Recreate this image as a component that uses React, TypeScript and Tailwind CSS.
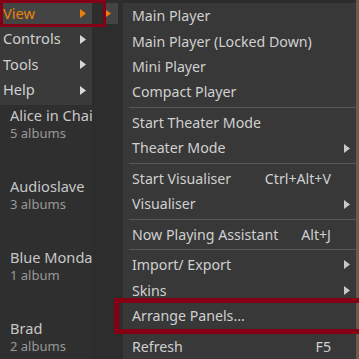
type Item =
  | { kind: "item"; label: string; shortcut?: string; sub?: boolean }
  | { kind: "sep" };

const items: Item[] = [
  { kind: "item", label: "Main Player" },
  { kind: "item", label: "Main Player (Locked Down)" },
  { kind: "item", label: "Mini Player" },
  { kind: "item", label: "Compact Player" },
  { kind: "sep" },
  { kind: "item", label: "Start Theater Mode" },
  { kind: "item", label: "Theater Mode", sub: true },
  { kind: "sep" },
  { kind: "item", label: "Start Visualiser", shortcut: "Ctrl+Alt+V" },
  { kind: "item", label: "Visualiser", sub: true },
  { kind: "sep" },
  { kind: "item", label: "Now Playing Assistant", shortcut: "Alt+J" },
  { kind: "sep" },
  { kind: "item", label: "Import/ Export", sub: true },
  { kind: "item", label: "Skins", sub: true },
  { kind: "item", label: "Arrange Panels..." },
  { kind: "sep" },
  { kind: "item", label: "Refresh", shortcut: "F5" },
];

const artists = [
  { name: "Alice in Chains", count: "5 albums" },
  { name: "Audioslave", count: "3 albums" },
  { name: "Blue Monday", count: "1 album" },
  { name: "Brad", count: "2 albums" },
];

function Arrow({ color = "#c8c8c8" }: { color?: string }) {
  return (
    <svg width="6" height="9" viewBox="0 0 6 9">
      <path d="M0 0 L6 4.5 L0 9 Z" fill={color} />
    </svg>
  );
}

export default function App() {
  return (
    <div
      className="relative flex h-[359px] w-[359px] overflow-hidden bg-[#2c2c2c] text-[14.2px] text-[#d0d0d0]"
      style={{ fontFamily: '"Noto Sans", "Open Sans", sans-serif' }}
    >
      {/* left: top menu + artist list */}
      <div className="flex w-[92px] flex-col">
        <div className="flex flex-col bg-[#3a3a3a] pt-[1px] pb-[2px] text-[14.6px]">
          {["View", "Controls", "Tools", "Help"].map((m, i) => (
            <div
              key={m}
              className={`flex h-[25.5px] items-center justify-between pl-[3px] pr-[6px] ${
                i === 0 ? "bg-[#444444] text-[#e8820c]" : ""
              }`}
            >
              <span>{m}</span>
              <Arrow color={i === 0 ? "#e8820c" : "#d8d8d8"} />
            </div>
          ))}
        </div>
        <div className="flex flex-1 flex-col overflow-hidden bg-[#2f2f2f]">
          {artists.map((a) => (
            <div key={a.name} className="flex h-[71px] shrink-0 flex-col pl-[10px]">
              <span className="whitespace-nowrap text-[14.6px] leading-[20px] text-[#c8c8c8]">{a.name}</span>
              <span className="text-[13px] leading-[17px] text-[#999999]">{a.count}</span>
            </div>
          ))}
        </div>
      </div>

      {/* middle strip */}
      <div className="flex w-[31px] flex-col bg-[#2d2d2d] pt-[3px]">
        <div className="ml-[13px] flex h-[21px] w-[13px] items-center bg-[#444444] pl-[1px]">
          <svg width="5" height="7" viewBox="0 0 5 7">
            <path d="M0 0 L5 3.5 L0 7 Z" fill="#e8820c" />
          </svg>
        </div>
      </div>

      {/* popup submenu */}
      <div className="mt-[3px] flex w-[233px] flex-col bg-[#383838]">
        {items.map((it, i) =>
          it.kind === "sep" ? (
            <div key={i} className="flex h-[5px] items-center pl-[6px]">
              <div className="h-px w-full bg-[#595959]" />
            </div>
          ) : (
            <div key={i} className="flex h-[25.5px] items-center justify-between pl-[9px] pr-[25px]">
              <span className="whitespace-nowrap">{it.label}</span>
              {it.shortcut && <span>{it.shortcut}</span>}
              {it.sub && (
                <span className="-mr-[19px]">
                  <Arrow />
                </span>
              )}
            </div>
          )
        )}
      </div>

      {/* image sliver at right */}
      <div className="flex-1 bg-[#6e5a48]" />

      {/* highlight outlines */}
      <div className="absolute left-0 top-0 h-[27px] w-[106px] border-[3px] border-[#850014]" />
      <div className="absolute left-[114px] top-[298px] h-[36px] w-[250px] border-[5px] border-[#850014]" />
    </div>
  );
}
